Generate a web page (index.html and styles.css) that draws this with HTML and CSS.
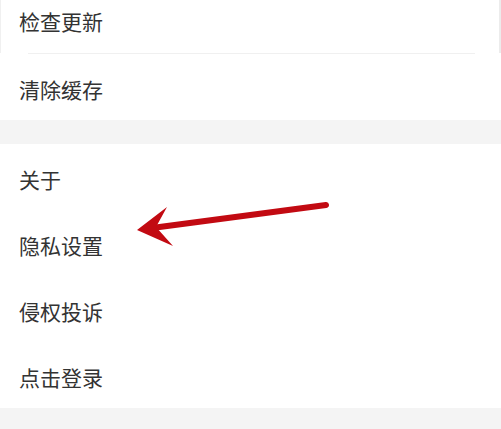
FILE: index.html
```html
<!DOCTYPE html>
<html lang="zh-CN">
<head>
    <meta charset="UTF-8">
    <meta name="viewport" content="width=device-width, initial-scale=1.0">
    <title>设置</title>
    <link rel="stylesheet" href="styles.css">
</head>
<body>
    <div class="settings">
        <div class="group group-top">
            <div class="row row-first">检查更新</div>
            <div class="divider"></div>
            <div class="row">清除缓存</div>
        </div>
        <div class="group">
            <div class="row">关于</div>
            <div class="row">隐私设置</div>
            <div class="row">侵权投诉</div>
            <div class="row">点击登录</div>
        </div>

        <!-- red arrow pointing at 隐私设置 -->
        <svg class="arrow" width="501" height="429" viewBox="0 0 501 429">
            <line x1="326" y1="218" x2="152" y2="241" stroke="#c20a12" stroke-width="6" stroke-linecap="round"/>
            <polygon points="137,243 167,220 156,240 173,259" fill="#c20a12"/>
        </svg>
    </div>
</body>
</html>
```

FILE: styles.css
```css
html, body {
    margin: 0;
    padding: 0;
}

body {
    background-color: #f4f4f4;
    font-family: "Noto Sans CJK SC", "Noto Sans", sans-serif;
    overflow: hidden;
}

.settings {
    position: relative;
    width: 501px;
    height: 429px;
}

.group {
    background-color: #ffffff;
    margin-bottom: 24px;
}

.group-top {
    margin-top: -13px;
}

.row {
    box-sizing: border-box;
    height: 66px;
    display: flex;
    align-items: center;
    padding: 3px 0 0 19px;
    font-size: 21px;
    color: #333333;
}

.row-first {
    padding-top: 2px;
    border-left: 1px solid #f0f0f0;
    border-right: 2px solid #ececec;
    padding-left: 18px;
}

.divider {
    height: 1px;
    margin: 0 26px 0 28px;
    background-color: #f0f0f0;
}

.arrow {
    position: absolute;
    left: 0;
    top: 0;
}
```
